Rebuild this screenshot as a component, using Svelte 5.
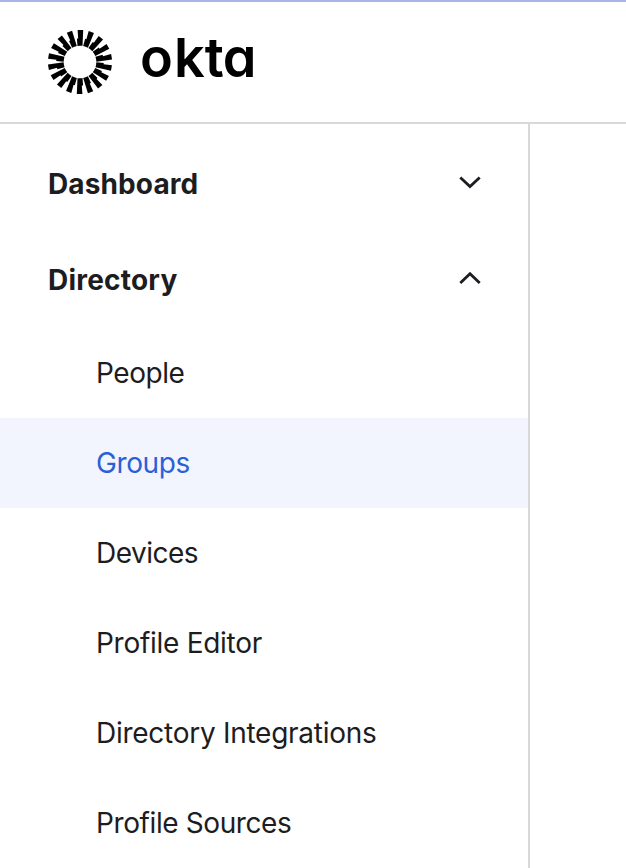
<script>
  const rays = Array.from({ length: 18 }, (_, i) => i * 20);
  const items = [
    { label: 'People', tracking: -0.45 },
    { label: 'Groups', tracking: -0.4 },
    { label: 'Devices', tracking: -0.5 },
    { label: 'Profile Editor', tracking: -0.28 },
    { label: 'Directory Integrations', tracking: -0.27 },
    { label: 'Profile Sources', tracking: -0.4 }
  ];
  const active = 'Groups';
</script>

<div class="page">
  <header>
    <svg class="aura" viewBox="-32 -32 64 64" aria-hidden="true">
      {#each rays as angle}
        <path transform="rotate({angle})" d="M-2.4-32H3.2L2.5-16.2Q0-16.5-2.5-16.1L-3.1-23.6H-1.8Z" />
      {/each}
    </svg>
    <span class="wordmark"><span class="o">o</span><span>k</span><span class="t">t</span><span>a</span></span>
  </header>
  <div class="body">
    <nav>
      <button class="section">
        <span>Dashboard</span>
        <svg class="chevron" viewBox="0 0 24 14"><path d="M2.3 1.4 12 10.6 21.7 1.4" /></svg>
      </button>
      <button class="section">
        <span class="wide">Directory</span>
        <svg class="chevron" viewBox="0 0 24 14"><path d="M2.3 10.9 12 1.7 21.7 10.9" /></svg>
      </button>
      <ul>
        {#each items as item}
          <li class:active={item.label === active} style:letter-spacing="{item.tracking}px">{item.label}</li>
        {/each}
      </ul>
    </nav>
    <main></main>
  </div>
</div>

<style>
  .page {
    box-sizing: border-box;
    height: 868px;
    overflow: hidden;
    display: flex;
    flex-direction: column;
    border-top: 2px solid #aab4e8;
    background: #fff;
    color: #1d1d21;
    font-family: Inter, 'Liberation Sans', sans-serif;
    font-size: 28px;
  }
  header {
    box-sizing: border-box;
    flex: none;
    height: 122px;
    display: flex;
    align-items: flex-start;
    padding: 26px 48px 0;
    border-bottom: 2px solid #d7d7dc;
  }
  .aura {
    width: 64px;
    height: 64px;
    margin-top: 2px;
    flex: none;
    fill: #000;
  }
  .wordmark {
    margin-left: 28px;
    color: #000;
    font-size: 54px;
    line-height: 60px;
    font-weight: 600;
    font-feature-settings: 'cv11';
  }
  .o {
    letter-spacing: 1px;
  }
  .t {
    letter-spacing: -1px;
  }
  .body {
    flex: 1;
    min-height: 0;
    display: flex;
  }
  nav {
    box-sizing: border-box;
    flex: none;
    width: 530px;
    padding-top: 12px;
    border-right: 2px solid #d7d7dc;
  }
  main {
    flex: 1;
  }
  .section {
    box-sizing: border-box;
    width: 100%;
    height: 96px;
    display: flex;
    align-items: center;
    justify-content: space-between;
    padding: 0 46px 0 48px;
    border: 0;
    background: none;
    color: inherit;
    font: inherit;
    font-weight: 700;
    letter-spacing: 0.12px;
  }
  .wide {
    letter-spacing: 0.22px;
  }
  .chevron {
    width: 24px;
    height: 14px;
    margin-bottom: 2px;
    fill: none;
    stroke: #1d1d21;
    stroke-width: 2.8;
  }
  ul {
    margin: 0;
    padding: 0;
    list-style: none;
  }
  li {
    height: 90px;
    line-height: 90px;
    padding-left: 96px;
  }
  .active {
    background: #f2f5fe;
    color: #2c5fd7;
  }
</style>
